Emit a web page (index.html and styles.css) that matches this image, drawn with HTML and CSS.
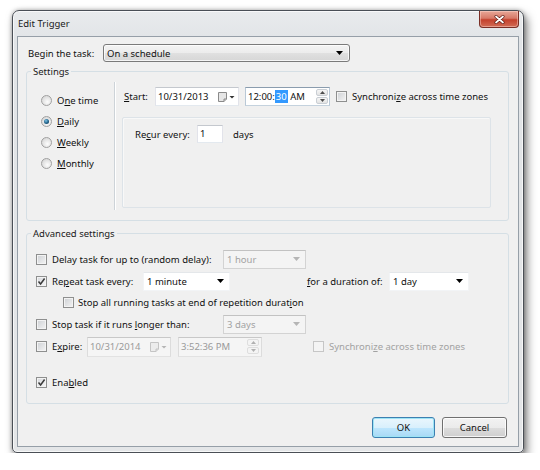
FILE: index.html
```html
<!DOCTYPE html>
<html>
<head>
<meta charset="utf-8">
<title>Edit Trigger</title>
<link rel="stylesheet" href="styles.css">
</head>
<body>
<div class="window">
  <div class="titlebar">
    <span class="title">Edit Trigger</span>
    <div class="close">
      <svg width="11" height="9" viewBox="0 0 11 9"><path d="M2 1.5 L9 7.5 M9 1.5 L2 7.5" stroke="#5a1a12" stroke-width="3" stroke-linecap="round"/><path d="M2 1.5 L9 7.5 M9 1.5 L2 7.5" stroke="#fff" stroke-width="1.7" stroke-linecap="round"/></svg>
    </div>
  </div>
  <div class="client">
    <div class="begin-row">
      <span class="begin-label">Begin the task:</span>
      <div class="combo-btn"><span>On a schedule</span><svg class="arrow" width="7" height="4" viewBox="0 0 7 4"><path d="M0 0H7L3.5 4Z" fill="#000"/></svg></div>
    </div>

    <fieldset class="group settings">
      <legend>Settings</legend>
      <div class="settings-body">
        <div class="radios">
          <div class="radio-row"><span class="radio"></span><span>O<u>n</u>e time</span></div>
          <div class="radio-row"><span class="radio on"><span class="dot"></span></span><span><u>D</u>aily</span></div>
          <div class="radio-row"><span class="radio"></span><span><u>W</u>eekly</span></div>
          <div class="radio-row"><span class="radio"></span><span><u>M</u>onthly</span></div>
        </div>
        <div class="sched">
          <div class="start-row">
            <span class="start-label"><u>S</u>tart:</span>
            <div class="field date">
              <span class="ftext">10/31/2013</span>
              <span class="cal">
                <svg width="18" height="10" viewBox="0 0 18 10"><path d="M0.5 0.5H8.5V7L6 9.5H0.5Z" fill="#e6e6e6" stroke="#8a8a8a"/><path d="M8.5 7H6V9.5" fill="#cfcfcf" stroke="#8a8a8a"/><path d="M11.5 4H16.5L14 6.5Z" fill="#333"/></svg>
              </span>
            </div>
            <div class="field time focus">
              <span class="ftext">12:00:<span class="sel">30</span> AM</span>
              <span class="spin"><span class="spin-up"><svg width="5" height="3" viewBox="0 0 5 3"><path d="M0 3H5L2.5 0Z" fill="#4d4d4d"/></svg></span><span class="spin-dn"><svg width="5" height="3" viewBox="0 0 5 3"><path d="M0 0H5L2.5 3Z" fill="#4d4d4d"/></svg></span></span>
            </div>
            <span class="check"></span>
            <span class="check-label">Synchroni<u>z</u>e across time zones</span>
          </div>
          <div class="recur-box">
            <div class="recur-row">
              <span class="recur-label">Re<u>c</u>ur every:</span>
              <div class="field num"><span class="ftext">1</span></div>
              <span>days</span>
            </div>
          </div>
        </div>
      </div>
    </fieldset>

    <fieldset class="group advanced">
      <legend>Advanced settings</legend>
      <div class="adv-body">
        <div class="row r1">
          <span class="check"></span>
          <span class="lbl w171">Delay task for up to (random delay):</span>
          <div class="combo disabled w83"><span>1 hour</span><svg width="7" height="4" viewBox="0 0 7 4"><path d="M0 0H7L3.5 4Z" fill="#b5b5b5"/></svg></div>
        </div>
        <div class="row r2">
          <span class="check on"><svg width="9" height="9" viewBox="0 0 9 9"><path d="M1.5 4.5L3.6 7L7.6 1.5" stroke="#3b3b3b" stroke-width="1.5" fill="none"/></svg></span>
          <span class="lbl w91">Re<u>p</u>eat task every:</span>
          <div class="combo edit w87"><span>1 minute</span><svg width="7" height="4" viewBox="0 0 7 4"><path d="M0 0H7L3.5 4Z" fill="#000"/></svg></div>
          <span class="lbl w82 dur"><u>f</u>or a duration of:</span>
          <div class="combo edit w80"><span>1 day</span><svg width="7" height="4" viewBox="0 0 7 4"><path d="M0 0H7L3.5 4Z" fill="#000"/></svg></div>
        </div>
        <div class="row r3">
          <span class="check"></span>
          <span class="lbl">Stop all running tasks at end of repetition durat<u>i</u>on</span>
        </div>
        <div class="row r4">
          <span class="check"></span>
          <span class="lbl w171">Stop task if it runs <u>l</u>onger than:</span>
          <div class="combo disabled w83"><span>3 days</span><svg width="7" height="4" viewBox="0 0 7 4"><path d="M0 0H7L3.5 4Z" fill="#b5b5b5"/></svg></div>
        </div>
        <div class="row r5">
          <span class="check"></span>
          <span class="lbl w35">E<u>x</u>pire:</span>
          <div class="field disabled d84">
            <span class="ftext">10/31/2014</span>
            <span class="cal">
              <svg width="18" height="10" viewBox="0 0 18 10"><path d="M0.5 0.5H8.5V7L6 9.5H0.5Z" fill="#ececec" stroke="#c4c4c4"/><path d="M8.5 7H6V9.5" fill="#dedede" stroke="#c4c4c4"/><path d="M11.5 4H16.5L14 6.5Z" fill="#b5b5b5"/></svg>
            </span>
          </div>
          <div class="field disabled d84 t2">
            <span class="ftext">3:52:36 PM</span>
            <span class="spin dis"><span class="spin-up"><svg width="5" height="3" viewBox="0 0 5 3"><path d="M0 3H5L2.5 0Z" fill="#b0b0b0"/></svg></span><span class="spin-dn"><svg width="5" height="3" viewBox="0 0 5 3"><path d="M0 0H5L2.5 3Z" fill="#b0b0b0"/></svg></span></span>
          </div>
          <span class="check dis sync2"></span>
          <span class="check-label dis-text">Synchroni<u>z</u>e across time zones</span>
        </div>
        <div class="row r6">
          <span class="check on"><svg width="9" height="9" viewBox="0 0 9 9"><path d="M1.5 4.5L3.6 7L7.6 1.5" stroke="#3b3b3b" stroke-width="1.5" fill="none"/></svg></span>
          <span class="lbl">Ena<u>b</u>led</span>
        </div>
      </div>
    </fieldset>

    <div class="buttons">
      <div class="btn default">OK</div>
      <div class="btn cancel">Cancel</div>
    </div>
  </div>
</div>
</body>
</html>
```

FILE: styles.css
```css
html, body {
  margin: 0;
  background: #ffffff;
}
body {
  font-family: "Noto Sans", "Open Sans", sans-serif;
  font-size: 9.5px;
  line-height: 13px;
  color: #111;
}
u { text-decoration-thickness: 1px; text-underline-offset: 1px; }

.window {
  margin: 10px 0 0 12px;
  width: 512px;
  height: 443px;
  box-sizing: border-box;
  border: 1px solid #4a4f56;
  border-radius: 7px 7px 5px 5px;
  background: linear-gradient(#e9ebed, #e1e4e7 30px, #e4e6e8);
  box-shadow: 3px 5px 10px rgba(0,0,0,0.5), 0 0 4px rgba(0,0,0,0.3), inset 0 0 0 1px rgba(255,255,255,0.7);
  display: flex;
  flex-direction: column;
}
.titlebar {
  height: 25px;
  display: flex;
  align-items: flex-start;
  padding-left: 5px;
}
.title {
  flex: 1;
  line-height: 25px;
  color: #1a1a1a;
}
.close {
  width: 40px;
  height: 17px;
  margin-right: 4px;
  box-sizing: border-box;
  border: 1px solid #7a2e25;
  border-top: none;
  border-radius: 0 0 4px 4px;
  background: linear-gradient(#e8a797, #d77a68 45%, #c4412d 55%, #d26c55);
  box-shadow: inset 0 0 0 1px rgba(255,220,210,0.45);
  display: flex;
  align-items: center;
  justify-content: center;
}

.client {
  margin: 0 4px 5px 4px;
  flex: 1;
  border: 1px solid #969fa8;
  background: #f0f0f0;
  display: flex;
  flex-direction: column;
}

.begin-row {
  margin-top: 7px;
  padding-left: 10px;
  display: flex;
  align-items: center;
}
.begin-label { width: 75px; }
.combo-btn {
  width: 247px;
  height: 18px;
  box-sizing: border-box;
  border: 1px solid #7a7a7a;
  border-radius: 3px;
  background: linear-gradient(#f3f3f3 0%, #ececec 50%, #e0e0e0 51%, #d6d6d6 100%);
  box-shadow: inset 0 0 0 1px rgba(255,255,255,0.75);
  display: flex;
  align-items: center;
  justify-content: space-between;
  padding: 0 6px 0 3px;
}

/* group boxes */
.group {
  margin: 0 0 0 8px;
  width: 483px;
  box-sizing: border-box;
  border: 1px solid #d5dfe5;
  border-radius: 3px;
  padding: 0 0 10px 0;
  min-inline-size: 0;
}
.group legend {
  padding: 0 2px;
  margin-left: 4px;
  line-height: 13px;
  color: #1a1a1a;
}
.settings { margin-top: 3px; }
.advanced { margin-top: 6px; }

.settings-body {
  display: flex;
  height: 128px;
  padding-top: 4px;
}
.radios {
  width: 87px;
  box-sizing: border-box;
  padding: 8px 0 0 14px;
}
.radio-row {
  height: 21px;
  display: flex;
  align-items: center;
  gap: 5px;
}
.radio {
  width: 11px;
  height: 11px;
  box-sizing: border-box;
  border-radius: 50%;
  border: 1px solid #a0a0a0;
  background: radial-gradient(circle at 60% 65%, #fdfdfd, #dcdcdc 70%, #cfcfcf);
  display: flex;
  align-items: center;
  justify-content: center;
}
.radio .dot {
  width: 5px;
  height: 5px;
  border-radius: 50%;
  background: radial-gradient(circle at 40% 35%, #7cc3e6, #1f5f86 55%, #103c58);
}

.sched {
  flex: 1;
  border-left: 1px solid #cdd3d8;
  box-shadow: inset 1px 0 0 #ffffff;
  padding: 5px 0 0 7px;
  box-sizing: border-box;
}
.start-row {
  height: 19px;
  padding-left: 2px;
  display: flex;
  align-items: center;
}
.start-label { width: 31px; }

.field {
  box-sizing: border-box;
  background: #ffffff;
  border: 1px solid;
  border-color: #c4c8ce #e2e3ea #e3e9ef #e2e3ea;
  display: flex;
  align-items: center;
  padding-left: 2px;
}
.field .ftext { flex: 1; white-space: nowrap; }
.field.date { width: 84px; height: 19px; }
.field.time { width: 85px; height: 19px; margin-left: 6px; padding-right: 1px; }
.field.focus { border-color: #8a9cae #b9c8d6 #c4d2de #b9c8d6; }
.field.num { width: 26px; height: 18px; margin-right: 10px; align-items: flex-start; padding-top: 1px; }
.sel { background: #3399ff; color: #fff; padding: 0 1px; }
.cal { display: flex; align-items: center; padding-right: 2px; }

.spin {
  width: 12px;
  height: 15px;
  display: flex;
  flex-direction: column;
  gap: 1px;
}
.spin-up, .spin-dn {
  flex: 1;
  box-sizing: border-box;
  border: 1px solid #c9ced4;
  border-radius: 2px;
  background: linear-gradient(#f6f6f6, #e3e3e3);
  display: flex;
  align-items: center;
  justify-content: center;
}
.spin.dis .spin-up, .spin.dis .spin-dn { border-color: #dedede; background: #f4f4f4; }

.check {
  width: 11px;
  height: 11px;
  box-sizing: border-box;
  border: 1px solid #8e8f8f;
  background: linear-gradient(135deg, #cdd0d4, #f4f4f4);
  box-shadow: inset 0 0 0 1px #f3f3f3;
  display: flex;
  align-items: center;
  justify-content: center;
  flex: none;
}
.check.on { background: linear-gradient(135deg, #d6d8dc, #f6f6f6); }
.check.dis { border-color: #c6c6c6; background: #f4f4f4; box-shadow: none; }
.start-row .check { margin-left: 6px; }
.check-label { margin-left: 5px; white-space: nowrap; }
.dis-text { color: #a2a2a2; }

.recur-box {
  margin-top: 11px;
  width: 369px;
  height: 91px;
  box-sizing: border-box;
  border: 1px solid #dde3e8;
  border-radius: 2px;
  box-shadow: inset 1px 1px 0 #f8f8f8;
  padding: 7px 0 0 12px;
}
.recur-row { display: flex; align-items: center; }
.recur-label { width: 62px; }

/* advanced */
.adv-body { padding-top: 8px; }
.row {
  display: flex;
  align-items: center;
  padding-left: 9px;
}
.row .check { margin-right: 5px; }
.r1, .r2, .r4 { height: 22px; }
.r3 { height: 21px; padding-left: 36px; }
.r3 .check { margin-right: 4px; }
.r5 { height: 23px; }
.r6 { height: 22px; margin-top: 13px; }
.lbl { white-space: nowrap; }
.w171 { width: 171px; }
.w91 { width: 91px; }
.w82 { width: 82px; }
.w35 { width: 35px; }
.dur { margin-left: 77px; }

.combo {
  box-sizing: border-box;
  height: 19px;
  display: flex;
  align-items: center;
  justify-content: space-between;
  padding: 0 5px 0 3px;
}
.combo.disabled {
  background: #f4f4f4;
  border: 1px solid #d3d3d3;
  border-top-color: #c2c2c2;
  color: #a2a2a2;
}
.combo.edit {
  background: #ffffff;
  border: 1px solid #f2f4f6;
  border-top-color: #e4e7ea;
}
.w83 { width: 83px; }
.w87 { width: 87px; }
.w80 { width: 80px; }

.field.disabled {
  background: #f5f5f5;
  border-color: #c8c8c8 #dcdcdc #e2e2e2 #dcdcdc;
  color: #9a9a9a;
}
.field.d84 { width: 84px; height: 20px; }
.field.t2 { margin-left: 7px; padding-right: 2px; }
.check.sync2 { margin-left: 51px; margin-right: 0; }

.buttons {
  margin-top: 13px;
  padding-right: 11px;
  display: flex;
  justify-content: flex-end;
  gap: 7px;
}
.btn {
  height: 21px;
  box-sizing: border-box;
  border: 1px solid #707070;
  border-radius: 3px;
  background: linear-gradient(#f2f2f2 0%, #ebebeb 50%, #dddddd 51%, #cfcfcf 100%);
  box-shadow: inset 0 0 0 1px rgba(255,255,255,0.8);
  display: flex;
  align-items: center;
  justify-content: center;
  color: #111;
}
.btn.default {
  width: 63px;
  border-color: #3c7fb1;
  background: linear-gradient(#eaf6fd 0%, #d9f0fc 50%, #bee6fd 51%, #a7d9f5 100%);
  box-shadow: inset 0 0 0 1px #9de4f5;
}
.btn.cancel { width: 65px; }
```
